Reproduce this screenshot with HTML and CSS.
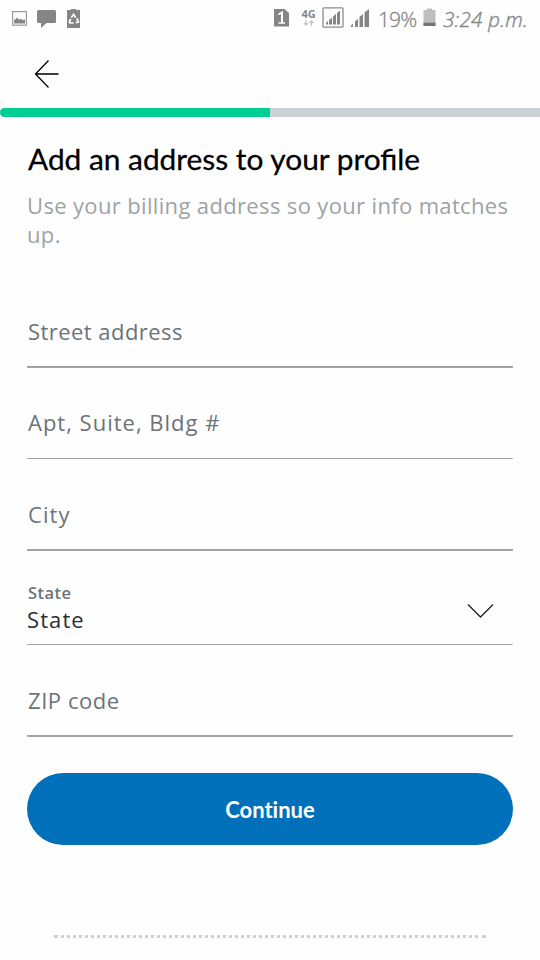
FILE: index.html
```html
<!DOCTYPE html>
<html lang="en">
<head>
<meta charset="utf-8">
<title>Add an address</title>
<link rel="stylesheet" href="styles.css">
</head>
<body>
<div class="status">
  <svg class="status-left" width="90" height="36" viewBox="0 0 90 36" fill="#858585">
    <rect x="12.6" y="11.6" width="13.8" height="13.6" fill="none" stroke="#9b9b9b" stroke-width="1.2"/>
    <path d="M14 23.500v-3l3-2.800 2.500 2 1.500-1 1.500 1.300 2.500-.4v3.900z"/>
    <path d="M38.500 10h16q1.500 0 1.500 1.500v10q0 1.500-1.500 1.500h-8l-5.500 5v-5h-2.500q-1.500 0-1.500-1.500v-10q0-1.500 1.500-1.500z"/>
    <path d="M67 10h4V9h5v1h4v18H67z"/>
    <path d="M71.300 17.500l2.200-3 2.200 3M76.800 18.500l1.600 3.200-2.700 1.100M73.500 23h-3.400l-.8-1.500 1.500-2.500" fill="none" stroke="#fff" stroke-width="1.700"/>
  </svg>
  <svg class="status-signal" width="99" height="36" viewBox="0 0 99 36" fill="#858585">
    <path d="M2 9h10.500l4.500 4v13.500H2z"/>
    <path d="M6.500 14.500l3.500-2V23" fill="none" stroke="#fff" stroke-width="2"/>
    <path d="M6.500 23h6.500" stroke="#fff" stroke-width="1.500"/>
    <text class="network" x="29.500" y="17.500">4G</text>
    <path d="M34 20v5M32 23l2 2 2-2M39.500 26v-5M37.500 23l2-2 2 2" fill="none" stroke="#c4c4c4" stroke-width="1.300"/>
    <rect x="51" y="7.800" width="20" height="19.400" rx="1" fill="none" stroke="#8b8b8b" stroke-width="1.300"/>
    <path d="M54 24.500v-1.500l2-2v3.500zM57 24.500v-4.500l3-2.500v7zM61 24.500v-8l3-2.500v10.500zM65 24.500v-11.500l3-2.500v14z"/>
    <path d="M79 27v-1.500l2-2V27zM83 27v-5.500l3-2.500v8zM87.500 27v-10l3.500-3v13zM92.500 27V12.500L97 9v18z"/>
  </svg>
  <span class="percent">19%</span>
  <svg class="battery" width="13" height="36" viewBox="0 0 13 36"><path d="M.5 10H4V8.500h5V10h3.500v16H.5z" fill="#bebebe"/><path d="M.5 22.700h12V26H.5z" fill="#747474"/></svg>
  <span class="clock">3:24 p.m.</span>
</div>
<header class="nav">
  <svg width="26" height="30" viewBox="0 0 26 30" fill="none" stroke="#000" stroke-width="1.300"><path d="M24.500 15H1.500M14.500 1.500L1.500 15l13 13.500"/></svg>
</header>
<div class="progress"><div class="progress-fill"></div></div>
<main class="page">
  <h1 class="title">Add an address to your profile</h1>
  <p class="lead"><span class="lead-first">Use your billing address so your info matches</span> up.</p>
  <form class="form">
    <div class="field street"><span>Street address</span></div>
    <div class="field apt"><span>Apt, Suite, Bldg #</span></div>
    <div class="field city"><span>City</span></div>
    <div class="field state">
      <div class="choice"><small>State</small><b>State</b></div>
      <svg class="chevron" width="27" height="16" viewBox="0 0 27 16" fill="none" stroke="#222" stroke-width="1.300"><path d="M1 1.500L13.500 14 26 1.500"/></svg>
    </div>
    <div class="field zip"><span>ZIP code</span></div>
    <button class="continue" type="button"><span>Continue</span></button>
  </form>
  <svg class="divider" width="432" height="3" viewBox="0 0 432 3"><path d="M0 1.500h4M7 1.500H426" stroke="#cbd2d6" stroke-width="3" stroke-dasharray="3 3"/><path d="M3 1.500h1M428 1.500h4" stroke="#cbd2d6" stroke-width="3"/></svg>
</main>
</body>
</html>
```
FILE: styles.css
```css
* { box-sizing: border-box; }
body {
  margin: 0;
  width: 540px;
  height: 960px;
  overflow: hidden;
  background: #fefefe;
  font-family: "Open Sans", "Noto Sans", sans-serif;
  font-size: 22px;
}
.status {
  display: flex;
  height: 36px;
  color: #858585;
  line-height: 39px;
  white-space: nowrap;
}
.status-left { margin-right: 182px; flex: none; }
.status-signal { flex: none; }
.network { font: 700 11px "Open Sans", sans-serif; }
.percent { width: 46px; padding-left: 7px; letter-spacing: -0.9px; flex: none; font-size: 21px; font-weight: 300; -webkit-text-stroke: 0.3px #858585; }
.battery { margin: 0 7px 0 6px; flex: none; }
.clock { font-size: 20.5px; flex: none; font-style: italic; font-weight: 300; letter-spacing: 0.3px; -webkit-text-stroke: 0.4px #858585; }
.nav { height: 72px; padding: 23px 0 0 33.5px; }
.nav svg { display: block; }
.progress { height: 9px; background: #cbd2d6; border-radius: 5px 0 0 5px; }
.progress-fill { width: 50%; height: 9px; background: #00cf92; border-radius: 5px 0 0 5px; }
.page { padding: 23px 27px 0; }
.title {
  margin: 0;
  height: 37px;
  padding-left: 1px;
  color: #000;
  font: 400 29.85px/38px Lato, sans-serif;
  -webkit-text-stroke: 0.3px #000;
  white-space: nowrap;
}
.lead {
  margin: 14px 0 0;
  height: 59px;
  color: #9da3a6;
  line-height: 29px;
  letter-spacing: 0.35px;
}
.lead-first { white-space: nowrap; }
.form { padding-top: 32px; }
.field {
  display: flex;
  justify-content: space-between;
  color: #6c7378;
  border-bottom: 2px solid #9da3a6;
  border-radius: 1px;
  padding-left: 1px;
  line-height: 30px;
  letter-spacing: 0.45px;
}
.street { height: 87px; padding-top: 35px; margin-top: -1px; }
.apt { height: 91px; padding-top: 39px; border-bottom-width: 1px; letter-spacing: 1px; }
.city { height: 92px; padding-top: 40px; letter-spacing: 1.1px; }
.state { height: 94px; padding: 32px 19px 0 0; border-bottom-width: 1px; }
.zip { height: 92px; padding-top: 40px; letter-spacing: 0.55px; }
.choice { display: flex; flex-direction: column; }
.choice small { padding-left: 1px; font-size: 16.5px; line-height: 20px; font-weight: 600; }
.choice b { color: #2c2e2f; font-weight: 400; line-height: 32px; letter-spacing: 1.1px; }
.chevron { margin-top: 20px; }
.continue {
  display: block;
  width: 100%;
  height: 72px;
  margin-top: 36px;
  padding: 1px 0 0;
  border: 0;
  border-radius: 36px;
  background: #0070ba;
  color: #fff;
  font: 700 22px Lato, sans-serif;
  font-variant-ligatures: none;
}
.divider { display: block; margin: 90px auto 0; }
```
